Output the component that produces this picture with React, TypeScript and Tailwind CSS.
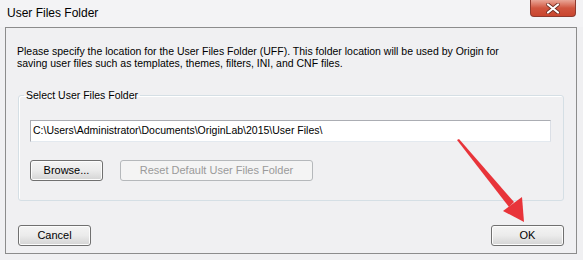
import React from 'react';

const font = { fontFamily: '"Liberation Sans", Arial, sans-serif' };

function WinButton({ label, disabled, className }: { label: string; disabled?: boolean; className?: string }) {
  return (
    <button
      disabled={disabled}
      className={
        'h-[21px] rounded-[3px] border text-[11px] leading-none ' +
        (disabled
          ? 'border-[#b5b8bb] bg-[#f4f4f4] text-[#9a9a9a] '
          : 'border-[#707070] bg-gradient-to-b from-[#f4f4f4] via-[#ebebeb] to-[#d4d4d4] text-black shadow-[inset_0_0_0_1px_#fcfcfc] ') +
        (className ?? '')
      }
    >
      {label}
    </button>
  );
}

export default function App() {
  return (
    <div className="relative w-[583px] h-[260px] bg-[#f0f0f2] flex flex-col overflow-hidden" style={font}>
      {/* Title bar */}
      <div className="h-[27px] flex items-start justify-between bg-[#f3f3f5]">
        <span className="pl-[7px] pt-[6px] text-[12px] leading-[15px] text-black">User Files Folder</span>
        <div className="mr-[7px] w-[46px] h-[17px] rounded-b-[4px] border border-t-0 border-[#8f3a2e] bg-gradient-to-b from-[#e9a597] via-[#d0553f] to-[#c9452e] flex items-center justify-center">
          <svg width="14" height="11" viewBox="0 0 14 11">
            <path d="M2 1.5 L12 9.5 M12 1.5 L2 9.5" stroke="#6b2a20" strokeWidth="3.6" strokeLinecap="round" />
            <path d="M2 1.5 L12 9.5 M12 1.5 L2 9.5" stroke="#ffffff" strokeWidth="2.2" strokeLinecap="round" />
          </svg>
        </div>
      </div>

      {/* Dialog body */}
      <div className="mx-[5px] w-[572px] h-[227px] border border-[#8c8c8c] bg-[#f0f0f2] flex flex-col">
        <p className="pl-[11px] pt-[18px] text-[10.5px] leading-[11.5px] text-black">
          Please specify the location for the User Files Folder (UFF). This folder location will be used by Origin for
          <br />
          saving user files such as templates, themes, filters, INI, and CNF files.
        </p>

        <fieldset className="mx-[12px] mt-[20px] h-[112px] rounded-[3px] border border-[#d5dfe5] shadow-[inset_1px_1px_0_#ffffff] px-[11px]">
          <legend className="-ml-[6px] px-[2px] text-[10.5px] leading-[12px] text-black">Select User Files Folder</legend>
          <div className="mt-[19px] h-[22px] w-[521px] border border-[#abadb3] border-r-[#dbdfe6] border-b-[#e3e9ef] bg-white flex items-center pl-[2px] text-[10.5px] text-black">
            C:\Users\Administrator\Documents\OriginLab\2015\User Files\
          </div>
          <div className="mt-[18px] flex gap-[17px]">
            <WinButton label="Browse..." className="w-[73px]" />
            <WinButton label="Reset Default User Files Folder" disabled className="w-[193px]" />
          </div>
        </fieldset>

        <div className="mt-auto mb-[7px] px-[12px] flex justify-between">
          <WinButton label="Cancel" className="w-[73px]" />
          <WinButton label="OK" className="w-[73px]" />
        </div>
      </div>

      {/* Red annotation arrow */}
      <svg className="absolute left-0 top-0 pointer-events-none" width="583" height="260" viewBox="0 0 583 260">
        <path d="M457 140 L459 139 L514 202 L509 207 Z" fill="#e8343a" />
        <path d="M503 211 L522 197 L524 222 Z" fill="#e8343a" />
      </svg>
    </div>
  );
}
